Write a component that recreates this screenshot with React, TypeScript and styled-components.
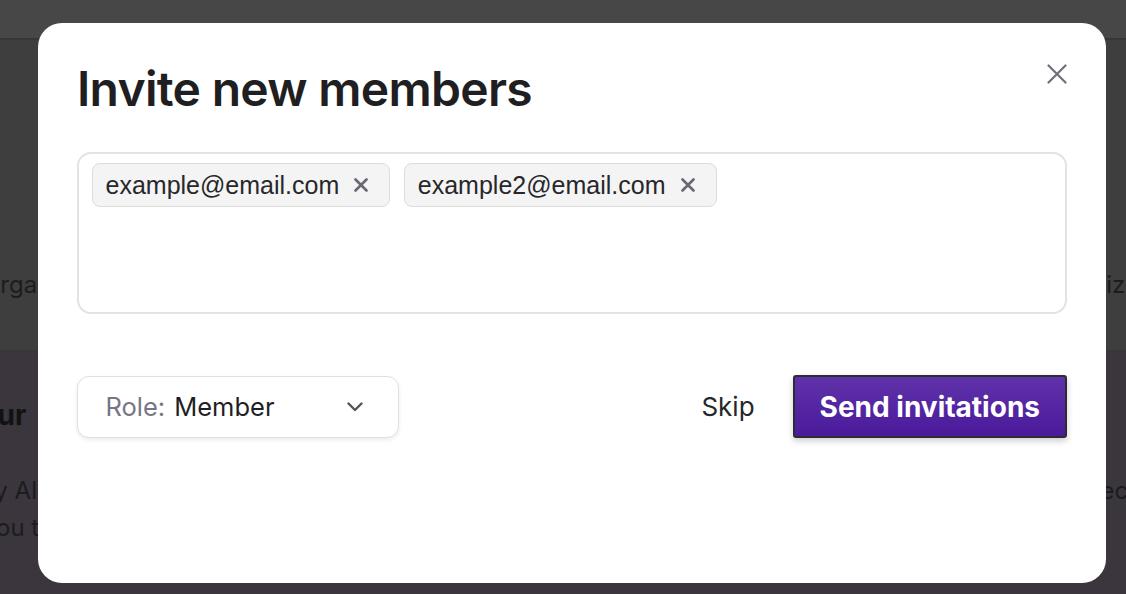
import styled, { createGlobalStyle } from "styled-components";

const GlobalStyle = createGlobalStyle`
  html, body {
    margin: 0;
    padding: 0;
  }
  body {
    width: 1126px;
    height: 594px;
    overflow: hidden;
    background: #3b353e;
    font-family: Inter, "Noto Sans", sans-serif;
  }
`;

/* page behind the dialog (already dimmed) */
const Page = styled.div`
  display: flex;
  flex-direction: column;
  height: 594px;
  overflow: hidden;
`;

const TopBar = styled.header`
  height: 38px;
  flex-shrink: 0;
  background: #474747;
  border-bottom: 2px solid #363636;
`;

const OrgSection = styled.section`
  height: 310px;
  flex-shrink: 0;
  box-sizing: border-box;
  padding-top: 226px;
  background: #3e3e3e;
`;

const InfoSection = styled.section`
  flex: 1;
  padding-top: 48px;
  background: #3b353e;
`;

const BgRow = styled.div<{ $bold?: boolean; $gap?: number }>`
  display: flex;
  justify-content: space-between;
  white-space: nowrap;
  font-size: ${({ $bold }) => ($bold ? "28px" : "24px")};
  font-weight: ${({ $bold }) => ($bold ? 700 : 400)};
  line-height: ${({ $bold }) => ($bold ? "34px" : "37px")};
  word-spacing: ${({ $bold }) => ($bold ? "8px" : "0")};
  margin-top: ${({ $gap }) => $gap ?? 0}px;
  color: ${({ $bold }) => ($bold ? "#121212" : "#1c1c1c")};
`;

const BgText = styled.span<{ $shift?: number; $end?: number }>`
  margin-left: ${({ $shift }) => $shift ?? 0}px;
  margin-right: ${({ $end }) => $end ?? 0}px;
`;

/* dialog */
const Overlay = styled.div`
  position: fixed;
  inset: 0;
  display: flex;
  align-items: flex-start;
  box-sizing: border-box;
  padding: 23px 20px 11px 38px;
`;

const Modal = styled.div`
  width: 1068px;
  height: 560px;
  box-sizing: border-box;
  padding: 37px 39px 0 39px;
  display: flex;
  flex-direction: column;
  background: #ffffff;
  border-radius: 24px;
`;

const Header = styled.div`
  display: flex;
  justify-content: space-between;
  align-items: flex-start;
`;

const Title = styled.h2`
  margin: 0;
  font-size: 48px;
  line-height: 58px;
  font-weight: 600;
  letter-spacing: -0.7px;
  color: #1f1f23;
`;

const CloseButton = styled.button`
  width: 20px;
  height: 20px;
  margin-top: 4px;
  padding: 0;
  border: 0;
  background: none;
  color: #6f6f7c;
  display: flex;
  cursor: pointer;
`;

const EmailBox = styled.div`
  margin-top: 34px;
  height: 162px;
  box-sizing: border-box;
  border: 2px solid #e3e3e3;
  border-radius: 14px;
  padding: 9px 13px;
  display: flex;
  flex-wrap: wrap;
  align-content: flex-start;
  gap: 14px;
`;

const Chip = styled.div`
  height: 44px;
  box-sizing: border-box;
  display: flex;
  align-items: center;
  gap: 15px;
  padding: 0 21px 0 12.5px;
  border: 1.5px solid #dcdcdc;
  border-radius: 8px;
  background: #f4f4f5;
  font-family: "Liberation Sans", Arial, sans-serif;
  font-size: 25px;
  color: #27272a;
`;

const ChipRemove = styled.button`
  width: 14px;
  height: 14px;
  padding: 0;
  border: 0;
  background: none;
  color: #676775;
  display: flex;
  cursor: pointer;
`;

const Footer = styled.div`
  margin-top: 61px;
  display: flex;
  align-items: center;
`;

const RoleSelect = styled.button`
  width: 322px;
  height: 62px;
  box-sizing: border-box;
  display: flex;
  align-items: center;
  padding: 0 35.5px 0 27.5px;
  border: 1.5px solid #e0e0e0;
  border-radius: 12px;
  background: #ffffff;
  box-shadow: 0 2px 4px rgba(0, 0, 0, 0.08);
  font-family: inherit;
  font-size: 25.5px;
  color: #1f1f23;
  cursor: pointer;
`;

const RoleLabel = styled.span`
  color: #767684;
  margin-right: 9px;
`;

const RoleValue = styled.span`
  flex: 1;
  text-align: left;
`;

const Spacer = styled.div`
  flex: 1;
`;

const SkipButton = styled.button`
  margin-right: 38px;
  padding: 0;
  border: 0;
  background: none;
  font-family: inherit;
  font-size: 26px;
  color: #27272a;
  cursor: pointer;
`;

const SendButton = styled.button`
  height: 63px;
  padding: 0 25px;
  border: 2px solid #2e2b33;
  border-radius: 3px;
  background: linear-gradient(180deg, #5f32aa 0%, #4a1a9b 100%);
  box-shadow: 0 3px 6px rgba(0, 0, 0, 0.2);
  font-family: inherit;
  font-size: 28px;
  font-weight: 700;
  color: #ffffff;
  cursor: pointer;
`;

const CrossIcon = ({ size, stroke }: { size: number; stroke: number }) => (
  <svg width={size} height={size} viewBox={`0 0 ${size} ${size}`} fill="none">
    <path
      d={`M1.5 1.5 L${size - 1.5} ${size - 1.5} M${size - 1.5} 1.5 L1.5 ${size - 1.5}`}
      stroke="currentColor"
      strokeWidth={stroke}
      strokeLinecap="round"
    />
  </svg>
);

const ChevronIcon = () => (
  <svg width="16" height="10" viewBox="0 0 16 10" fill="none">
    <path d="M1.5 1.5 L8 8 L14.5 1.5" stroke="#555559" strokeWidth="2.4" strokeLinecap="round" strokeLinejoin="round" />
  </svg>
);

const emails = ["example@email.com", "example2@email.com"];

export default function App() {
  return (
    <>
      <GlobalStyle />
      <Page>
        <TopBar />
        <OrgSection>
          <BgRow>
            <BgText $shift={-18}>Organize members across your organization and customiz</BgText>
            <BgText $end={-13}>organize</BgText>
          </BgRow>
        </OrgSection>
        <InfoSection>
          <BgRow $bold>
            <BgText $shift={-37}>Your team workspace</BgText>
          </BgRow>
          <BgRow $gap={40}>
            <BgText $shift={-20}>by AI assistants that help your team move faster and</BgText>
            <BgText $end={-10}>select</BgText>
          </BgRow>
          <BgRow>
            <BgText $shift={-17}>you to collaborate in one place</BgText>
          </BgRow>
        </InfoSection>
      </Page>

      <Overlay>
        <Modal role="dialog" aria-label="Invite new members">
          <Header>
            <Title>Invite new members</Title>
            <CloseButton aria-label="Close">
              <CrossIcon size={20} stroke={2.2} />
            </CloseButton>
          </Header>

          <EmailBox>
            {emails.map((email) => (
              <Chip key={email}>
                {email}
                <ChipRemove aria-label={`Remove ${email}`}>
                  <CrossIcon size={14} stroke={2.6} />
                </ChipRemove>
              </Chip>
            ))}
          </EmailBox>

          <Footer>
            <RoleSelect>
              <RoleLabel>Role:</RoleLabel>
              <RoleValue>Member</RoleValue>
              <ChevronIcon />
            </RoleSelect>
            <Spacer />
            <SkipButton>Skip</SkipButton>
            <SendButton>Send invitations</SendButton>
          </Footer>
        </Modal>
      </Overlay>
    </>
  );
}
